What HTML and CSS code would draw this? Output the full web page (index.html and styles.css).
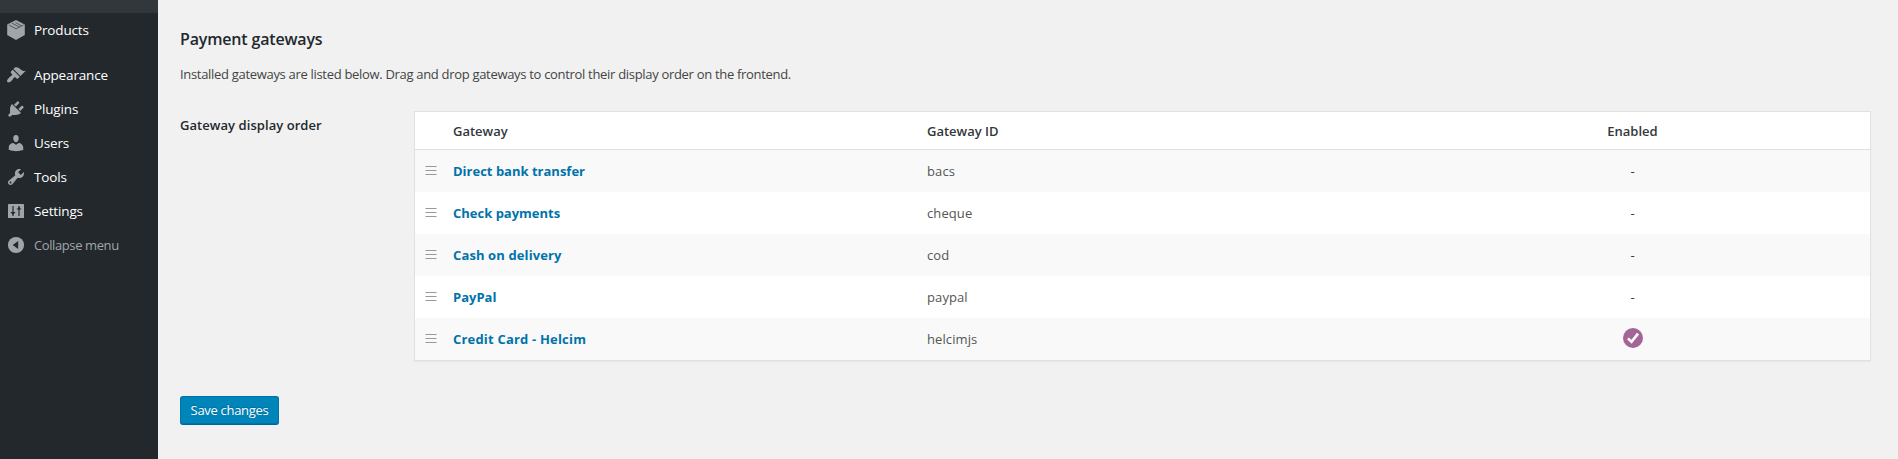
FILE: index.html
```html
<!DOCTYPE html>
<html lang="en">
<head>
<meta charset="utf-8">
<title>Payment gateways</title>
<link rel="stylesheet" href="styles.css">
</head>
<body>
<div class="layout">
  <nav class="menu">
    <div class="menu-current"></div>
    <a class="menu-item products"><svg class="icon" viewBox="0 0 20 20"><path d="M10 0L18.800 4.400V15L10 20L1.200 15V4.400Z"/><path class="cut" d="M2.800 5L10 8.800L17.500 5M6 3.200L13.200 7M9.500 2.600L15.500 5.800"/></svg><span>Products</span></a>
    <div class="menu-separator"></div>
    <a class="menu-item appearance"><svg class="icon" viewBox="0 0 20 20"><path d="M14.480 11.060L7.410 3.990l1.500-1.500c.5-.56 2.300-.47 3.510.32 1.210.8 1.430 1.280 2.910 2.100 1.180.64 2.450 1.260 4.450.85zm-.71.71L6.700 4.700 4.930 6.470c-.39.39-.39 1.020 0 1.410l1.060 1.060c.39.39.39 1.030 0 1.420-.6.6-1.430 1.110-2.210 1.690-.35.26-.7.53-1.010.84C1.430 14.230.4 16.080 1.400 17.070c.99 1 2.840-.03 4.180-1.360.31-.31.58-.66.85-1.020.57-.78 1.080-1.610 1.690-2.210.39-.39 1.020-.39 1.410 0l1.060 1.060c.39.39 1.020.39 1.410 0z"/></svg><span>Appearance</span></a>
    <a class="menu-item plugins"><svg class="icon" viewBox="0 0 20 20"><path d="M13.110 4.360L9.870 7.600 8 5.730l3.240-3.240c.35-.34 1.050-.2 1.560.32.52.51.66 1.210.31 1.550zm-8 1.770l.91-1.120 9.010 9.010-1.190.84c-.71.71-2.630 1.160-3.820 1.160H6.140L4.900 17.260c-.59.59-1.540.59-2.120 0-.59-.58-.59-1.530 0-2.120l1.240-1.240v-3.880c0-1.130.4-3.190 1.090-3.890zm7.260 3.970l3.240-3.240c.34-.35 1.040-.21 1.550.31.52.51.66 1.210.31 1.550l-3.240 3.250z"/></svg><span>Plugins</span></a>
    <a class="menu-item users"><svg class="icon" viewBox="0 0 20 20"><path d="M10 9.250c-2.270 0-2.730-3.440-2.730-3.440C7 4.020 7.820 2 9.970 2c2.160 0 2.980 2.020 2.710 3.810 0 0-.41 3.440-2.680 3.440zm0 2.570L12.720 10c2.390 0 4.520 2.330 4.520 4.530v2.490s-3.650 1.130-7.240 1.130c-3.650 0-7.240-1.130-7.240-1.130v-2.490c0-2.250 1.940-4.480 4.470-4.480z"/></svg><span>Users</span></a>
    <a class="menu-item tools"><svg class="icon" viewBox="0 0 20 20"><path d="M16.680 9.770c-1.340 1.340-3.300 1.670-4.950.99l-5.410 6.520c-.99.99-2.590.99-3.580 0s-.99-2.590 0-3.570l6.520-5.420c-.68-1.650-.35-3.610.99-4.950 1.280-1.280 3.120-1.620 4.720-1.060l-2.890 2.890 2.820 2.820 2.860-2.870c.53 1.580.18 3.390-1.080 4.650zM3.810 16.210c.4.39 1.040.39 1.430 0 .4-.4.4-1.040 0-1.430-.39-.4-1.030-.4-1.430 0-.39.39-.39 1.030 0 1.430z"/></svg><span>Tools</span></a>
    <a class="menu-item settings"><svg class="icon" viewBox="0 0 20 20"><rect x="2" y="3" width="16" height="14" rx="0.6"/><path class="slot" d="M7 5V15M13 5V15"/><path class="knob" d="M4.800 11H9.200V12.200H8.200L7 14L5.800 12.200H4.800ZM10.800 8.600H15.200V7.400H14.200L13 5.600L11.800 7.400H10.800Z"/></svg><span>Settings</span></a>
    <a class="menu-item collapse"><svg class="icon" viewBox="0 0 20 20"><circle cx="10" cy="10" r="8.100"/><path class="knob" d="M12.200 5.900V14.100L6.700 10Z"/></svg><span>Collapse menu</span></a>
  </nav>
  <main class="content">
    <h2 class="title"><span>Payment gateways</span></h2>
    <p class="intro"><span>Installed gateways are listed below. Drag and drop gateways to control their display order on the frontend.</span></p>
    <div class="field">
      <div class="label"><span>Gateway display order</span></div>
      <div class="table">
        <div class="row head"><span></span><span>Gateway</span><span>Gateway ID</span><span class="status">Enabled</span></div>
        <div class="row odd"><svg class="grip" viewBox="0 0 12 9"><path d="M.5 .5H11.500M.5 4.500H11.500M.5 8.500H11.500"/></svg><a class="name">Direct bank transfer</a><span class="id">bacs</span><span class="status">-</span></div>
        <div class="row"><svg class="grip" viewBox="0 0 12 9"><path d="M.5 .5H11.500M.5 4.500H11.500M.5 8.500H11.500"/></svg><a class="name">Check payments</a><span class="id">cheque</span><span class="status">-</span></div>
        <div class="row odd"><svg class="grip" viewBox="0 0 12 9"><path d="M.5 .5H11.500M.5 4.500H11.500M.5 8.500H11.500"/></svg><a class="name delivery">Cash on delivery</a><span class="id">cod</span><span class="status">-</span></div>
        <div class="row"><svg class="grip" viewBox="0 0 12 9"><path d="M.5 .5H11.500M.5 4.500H11.500M.5 8.500H11.500"/></svg><a class="name">PayPal</a><span class="id">paypal</span><span class="status">-</span></div>
        <div class="row odd"><svg class="grip" viewBox="0 0 12 9"><path d="M.5 .5H11.500M.5 4.500H11.500M.5 8.500H11.500"/></svg><a class="name card">Credit Card - Helcim</a><span class="id">helcimjs</span><span class="status"><svg class="check" viewBox="0 0 20 20"><circle cx="10" cy="10" r="10"/><path d="M5 10.300L8.500 13.800L15 5.600"/></svg></span></div>
      </div>
    </div>
    <button class="save"><span>Save changes</span></button>
  </main>
</div>
</body>
</html>
```
FILE: styles.css
```css
* { box-sizing: border-box; }
body {
  margin: 0;
  background: #f1f1f1;
  font-family: "Open Sans", "Noto Sans", sans-serif;
  font-size: 13px;
  color: #444;
}
.layout { display: flex; height: 459px; overflow: hidden; }
.menu { width: 158px; flex: none; background: #23282d; }
.menu-current { height: 13px; background: #32373c; }
.menu-separator { height: 11px; }
.menu-item {
  display: flex;
  align-items: center;
  height: 34px;
  padding-left: 6px;
  gap: 8px;
  color: #fff;
  font-size: 13.5px;
  letter-spacing: -0.15px;
  white-space: nowrap;
}
.icon { width: 20px; height: 20px; flex: none; fill: #a0a5aa; }
.icon .cut { fill: none; stroke: #23282d; stroke-width: 0.6; }
.icon .slot { fill: none; stroke: #23282d; stroke-width: 1.2; }
.icon .knob { fill: #23282d; }
.collapse { color: #a0a5aa; font-size: 13px; letter-spacing: -0.4px; }
.content { flex: 1; min-width: 0; padding: 29px 27px 0 22px; }
.title {
  margin: 0;
  height: 20px;
  line-height: 20px;
  font-size: 16px;
  font-weight: 600;
  letter-spacing: -0.17px;
  color: #23282d;
}
.intro { margin: 15px 0 0; height: 20px; line-height: 20px; letter-spacing: -0.31px; }
.field { display: flex; margin-top: 27px; }
.label {
  width: 234px;
  flex: none;
  padding-top: 4px;
  line-height: 20px;
  font-weight: 600;
  letter-spacing: 0.06px;
  color: #23282d;
}
.table {
  flex: 1;
  min-width: 0;
  height: 250px;
  border: 1px solid #e1e1e1;
  background: #fff;
  box-shadow: 0 1px 1px rgba(0, 0, 0, 0.04);
}
.row {
  display: grid;
  grid-template-columns: 38px 474px 468px 1fr;
  align-items: center;
  height: 42px;
  color: #555;
}
.row.odd { background: #f9f9f9; }
.head {
  height: 38px;
  border-bottom: 1px solid #e1e1e1;
  color: #32373c;
  font-weight: 600;
}
.id { letter-spacing: 0.1px; }
.name { color: #0073aa; font-weight: 700; }
.delivery { letter-spacing: 0.12px; }
.card { letter-spacing: 0.19px; }
.status { display: flex; justify-content: center; color: #32373c; }
.grip { width: 12px; height: 9px; margin: 0 0 1px 10px; fill: none; stroke: #999; stroke-width: 1; }
.check { width: 20px; height: 20px; margin-bottom: 2px; fill: #a46497; }
.check path { fill: none; stroke: #fff; stroke-width: 2.600; }
.save {
  display: block;
  width: 99px;
  height: 29px;
  margin-top: 35px;
  padding: 0 0 2px;
  border: 1px solid #0073aa;
  border-bottom-color: #006799;
  border-radius: 3px;
  background: #0085ba;
  box-shadow: inset 0 -1px 0 #0073aa;
  color: #fff;
  font-family: inherit;
  font-size: 13px;
  letter-spacing: -0.3px;
  text-shadow: 0 -1px 1px #006799;
  white-space: nowrap;
}
```
